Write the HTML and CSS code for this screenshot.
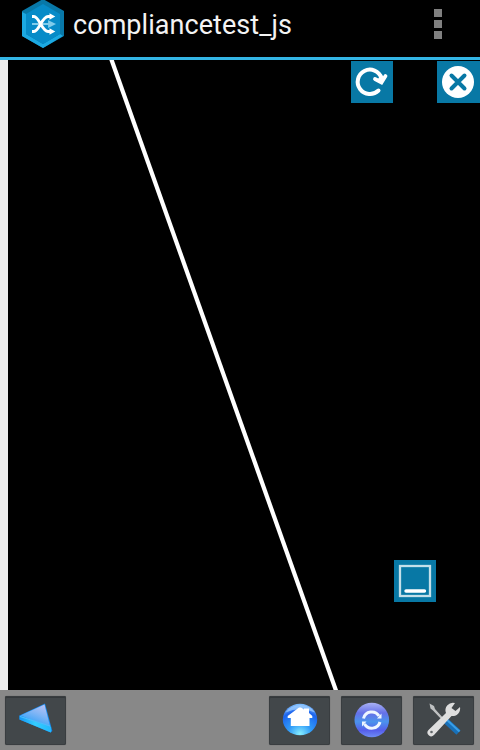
FILE: index.html
```html
<!DOCTYPE html>
<html lang="en">
<head>
<meta charset="utf-8">
<title>compliancetest_js</title>
<link rel="stylesheet" href="styles.css">
</head>
<body>
<header class="action-bar">
  <svg class="logo" width="44" height="49" viewBox="21 0 44 49">
    <path d="M43-1 64 11V36L43 48 22 36V11Z" fill="#0878a8"/>
    <path d="M22 12 26 14V34L43 44 60 34 63 36 43 48 22 36Z" fill="#1ca9e2"/>
    <path d="M43 4 60 14V34L43 44 26 34V14Z" fill="#078bc8"/>
    <path d="M32 24H51M49 21.5 54 24 49 26.5Z" fill="#80cceb" stroke="#80cceb" stroke-width="1.8"/>
    <path d="M32 16.500H34C39 16.500 42 31.500 48 31.500H51M32 31.500H34C39 31.500 42 16.500 48 16.500H51" fill="none" stroke="#fff" stroke-width="2.900"/>
    <path d="M49.500 13.300 55.300 16.500 49.500 19.700ZM49.500 28.300 55.300 31.500 49.500 34.700Z" fill="#fff"/>
  </svg>
  <h1 class="title">compliancetest_js</h1>
  <div class="overflow"><i></i><i></i><i></i></div>
</header>
<main class="page">
  <div class="canvas">
    <svg class="line" width="472" height="630" viewBox="8 60 472 630"><path d="M109.800 55 337.600 695" stroke="#fff" stroke-width="4.200"/></svg>
  </div>
  <button class="tool reload" aria-label="Reload">
    <svg width="42" height="42" viewBox="0 0 42 42"><path d="M27.500 29.500A12.200 12.200 0 1 1 30.500 17" fill="none" stroke="#fff" stroke-width="4" stroke-linecap="round"/><path d="M24 18 30.500 21.500 34.500 15" fill="none" stroke="#fff" stroke-width="3.800" stroke-linecap="round" stroke-linejoin="miter"/><path d="M27 18 29.500 14 33 16 31 21Z" fill="#fff"/></svg>
  </button>
  <button class="tool close" aria-label="Close">
    <svg width="42" height="42" viewBox="0 0 42 42"><circle cx="21" cy="21" r="16" fill="#fff"/><path d="M14.500 14.500 27.500 27.500M27.500 14.500 14.500 27.500" stroke="#0878a5" stroke-width="4" stroke-linecap="round"/></svg>
  </button>
  <button class="tool minimize" aria-label="Minimize">
    <svg width="42" height="42" viewBox="0 0 42 42"><rect x="6" y="6" width="30" height="30" fill="none" stroke="#c4e0ea" stroke-width="2.300"/><path d="M12 31H30.500" stroke="#fff" stroke-width="3.400" stroke-linecap="round"/></svg>
  </button>
</main>
<footer class="nav">
  <button class="key back" aria-label="Back">
    <svg width="61" height="49" viewBox="5 696 61 49">
      <defs>
        <linearGradient id="backTop" x1=".9" y1="0" x2=".4" y2="1"><stop stop-color="#c0c3f5"/><stop offset=".45" stop-color="#80b5f5"/><stop offset="1" stop-color="#209cf8"/></linearGradient>
        <linearGradient id="backSide"><stop stop-color="#1598f5"/><stop offset=".5" stop-color="#35cdff"/><stop offset="1" stop-color="#22b8fb"/></linearGradient>
      </defs>
      <path d="M45 703.500 19.500 715.500V719.500L50.500 732.500 52.300 731Z" fill="#168cf0"/>
      <path d="M44.500 704.500 20.500 715.500 50.500 728Z" fill="url(#backTop)"/>
      <path d="M19.500 715.500 51 727V732.500L19.500 719.500Z" fill="url(#backSide)"/>
      <path d="M20 716.500 50 726" stroke="#4dbdfc" stroke-width="1.200"/>
    </svg>
  </button>
  <button class="key" aria-label="Home">
    <svg width="61" height="49" viewBox="269 696 61 49">
      <defs><radialGradient id="home" cx=".5" cy=".95" r=".95"><stop stop-color="#88efff"/><stop offset=".35" stop-color="#319cf8"/><stop offset=".75" stop-color="#1c64ef"/><stop offset="1" stop-color="#83c2ff"/></radialGradient></defs>
      <ellipse cx="300" cy="719.500" rx="17.200" ry="15.800" fill="url(#home)"/>
      <path d="M285.500 712.500A17 15 0 0 1 315 712.500Q300 706 285.500 712.500Z" fill="#acd7ff" opacity=".65"/>
      <path d="M299 707.500H301L304 709.500V708.500H309V713L312.300 716V718H309.500V726H290.800V718H287.700V716Z" fill="#fff"/>
    </svg>
  </button>
  <button class="key" aria-label="Refresh">
    <svg width="61" height="49" viewBox="341 696 61 49">
      <defs><linearGradient id="sync" x1="0" y1="0" x2="0" y2="1"><stop stop-color="#a9b1f3"/><stop offset=".3" stop-color="#6570e8"/><stop offset=".55" stop-color="#4b93ec"/><stop offset=".8" stop-color="#565eeb"/><stop offset="1" stop-color="#6e8df4"/></linearGradient></defs>
      <circle cx="371.800" cy="720" r="17.300" fill="url(#sync)"/>
      <path d="M363.500 718.500A8.500 8.500 0 0 1 379 716M380 722A8.500 8.500 0 0 1 364.500 724" fill="none" stroke="#eef6ff" stroke-width="3"/>
      <path d="M377 718.500H381.500V713.500ZM366.500 721.500H362V726.500Z" fill="#eef6ff"/>
    </svg>
  </button>
  <button class="key" aria-label="Settings">
    <svg width="61" height="49" viewBox="413 696 61 49">
      <path d="M429.500 703.500 434 706 435 709 444.500 719.500 443 721 433 710.500 430.500 708.500Z" fill="#bfc1c2"/>
      <path d="M445.500 720.500 458.500 732.500" stroke="#1870b8" stroke-width="6"/>
      <path d="M446.500 719.500 459.500 731.500" stroke="#399ee8" stroke-width="2"/>
      <path d="M455 703A7.500 7.500 0 0 0 446 713L428.500 730A3.500 3.500 0 0 0 434 735L451.500 716A7.500 7.500 0 0 0 460 707L455.500 711 451.500 708Z" fill="#dedede"/>
      <circle cx="431.500" cy="732" r="1.300" fill="#62676a"/>
    </svg>
  </button>
</footer>
</body>
</html>
```
FILE: styles.css
```css
* { box-sizing: border-box; }
body {
  margin: 0;
  width: 480px;
  height: 750px;
  display: flex;
  flex-direction: column;
  overflow: hidden;
  background: #000;
  font-family: Roboto, sans-serif;
}
button { border: 0; padding: 0; margin: 0; }
svg { display: block; }
.action-bar {
  height: 60px;
  flex: none;
  display: flex;
  align-items: flex-start;
  padding: 0 38px 0 21px;
  border-bottom: 3px solid #33b5e5;
}
.logo { flex: none; }
.title {
  margin: 9px 0 0 8px;
  font-size: 27px;
  line-height: 32px;
  font-weight: 400;
  letter-spacing: 0.05px;
  color: #f3f3f3;
  white-space: nowrap;
}
.overflow {
  margin: 9px 0 0 auto;
  display: flex;
  flex-direction: column;
  gap: 3px;
}
.overflow i { width: 8px; height: 8px; background: #808080; }
.page {
  position: relative;
  height: 630px;
  flex: none;
  padding-left: 8px;
  background: #eee;
}
.canvas { height: 630px; background: #000; }
.tool {
  position: absolute;
  width: 42px;
  height: 42px;
  background: #0878a5;
}
.reload { left: 351px; top: 1px; }
.close { left: 437px; top: 1px; width: 43px; }
.minimize { left: 394px; top: 500px; }
.nav {
  height: 60px;
  flex: none;
  display: flex;
  gap: 11px;
  padding: 6px 6px 6px 5px;
  background: #888;
}
.key {
  width: 61px;
  height: 49px;
  border-radius: 2px;
  background: #42474a;
  box-shadow: inset 0 0 0 1px #393d40, inset 0 2px 0 #34383b, 0 0 1px #555;
}
.back { margin-right: auto; }
```
